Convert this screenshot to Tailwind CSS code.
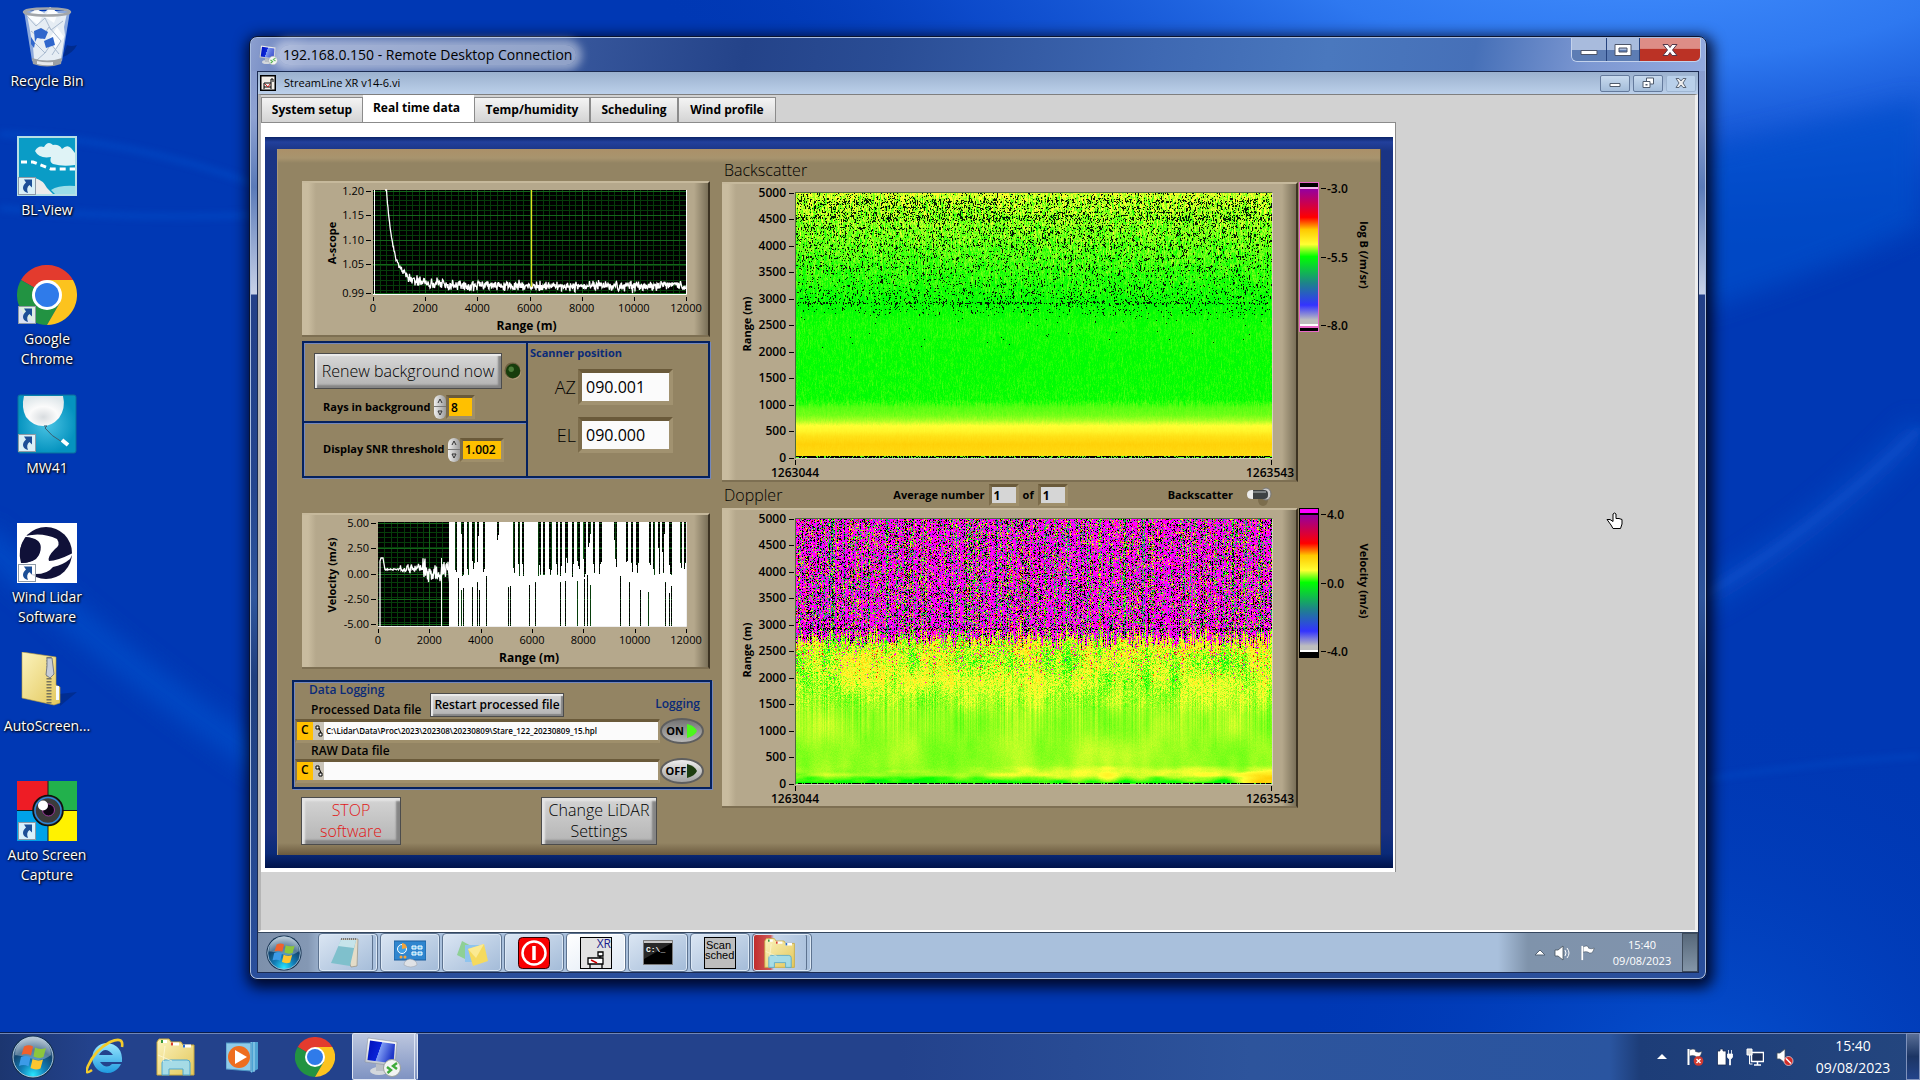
<!DOCTYPE html>
<html lang="en">
<head>
  <meta charset="UTF-8">
  <meta name="viewport" content="width=device-width, initial-scale=1.0">
  <title>StreamLine XR – Remote Desktop</title>
  <script src="https://cdn.jsdelivr.net/npm/@tailwindcss/browser@4"></script>
</head>
<body class="relative h-screen overflow-hidden bg-[#0038b4] font-['Open_Sans','Noto_Sans',sans-serif] text-black">

  <!-- Wallpaper -->
  <svg class="absolute inset-0 h-full w-full" viewBox="0 0 1920 1080" preserveAspectRatio="none" aria-hidden="true">
    <defs>
      <radialGradient id="sky" gradientUnits="userSpaceOnUse" cx="1640" cy="-60" r="1000" gradientTransform="matrix(1 0 0 .34 0 -38)">
        <stop offset="0" stop-color="#4490ff"/><stop offset=".35" stop-color="#2e78f0"/><stop offset=".7" stop-color="#1050d2" stop-opacity=".75"/><stop offset="1" stop-color="#0038b4" stop-opacity="0"/>
      </radialGradient>
      <radialGradient id="low" cx="1700" cy="1120" r="420" gradientUnits="userSpaceOnUse">
        <stop offset="0" stop-color="#0656d6"/><stop offset="1" stop-color="#0038b4" stop-opacity="0"/>
      </radialGradient>
      <filter id="soft" x="-20%" y="-20%" width="140%" height="140%"><feGaussianBlur stdDeviation="12"/></filter>
      <filter id="thin" x="-20%" y="-50%" width="140%" height="200%"><feGaussianBlur stdDeviation="3"/></filter>
    </defs>
    <rect width="1920" height="1080" fill="#0038b4"/>
    <rect width="1920" height="500" fill="url(#sky)"/>
    <rect y="600" width="1920" height="480" fill="url(#low)"/>
    <path d="M1700 310Q1830 270 1920 225V100L1700 150Z" fill="#0650cc" opacity=".7" filter="url(#soft)"/>
    <path d="M1700 600Q1820 530 1920 428" stroke="#0a54d0" stroke-width="22" fill="none" opacity=".6" filter="url(#soft)"/>
    <path d="M1700 598Q1820 526 1920 428" stroke="#0a54d0" stroke-width="8" fill="none" opacity=".4" filter="url(#thin)"/>
    <path d="M1700 780Q1820 762 1920 756" stroke="#0a50cc" stroke-width="4" fill="none" opacity=".5" filter="url(#thin)"/>
    <path d="M-20 535Q110 660 270 765" stroke="#0450cc" stroke-width="26" fill="none" opacity=".8" filter="url(#soft)"/>
    <path d="M0 134Q130 138 260 186M0 208Q130 220 260 215" stroke="#0650cc" stroke-width="6" fill="none" opacity=".5" filter="url(#thin)"/>
  </svg>

  <!-- Shared icons -->
  <svg class="absolute h-0 w-0" aria-hidden="true">
    <defs>
      <linearGradient id="silver" x2="0" y2="1"><stop stop-color="#fff"/><stop offset="1" stop-color="#bcc2ca"/></linearGradient>
      <linearGradient id="folder" x2="1" y2="1"><stop stop-color="#fbf3bd"/><stop offset="1" stop-color="#e3c75b"/></linearGradient>
      <radialGradient id="orbfill" cx=".5" cy=".95" r=".9"><stop stop-color="#29e6ff"/><stop offset=".35" stop-color="#127fb8"/><stop offset=".7" stop-color="#12456f"/><stop offset="1" stop-color="#8fa8bd"/></radialGradient>
      <linearGradient id="screen" x2="1" y2=".3"><stop stop-color="#0010b8"/><stop offset=".5" stop-color="#0a24d8"/><stop offset=".52" stop-color="#7f9cf4"/><stop offset="1" stop-color="#2038c8"/></linearGradient>
      <linearGradient id="aqua" x2="0" y2="1"><stop stop-color="#9be8ff"/><stop offset="1" stop-color="#1f9be0"/></linearGradient>
      <radialGradient id="teal"><stop stop-color="#4cc4e4"/><stop offset="1" stop-color="#0593bf"/></radialGradient>
      <radialGradient id="balloon" cx=".5" cy=".7" r=".7"><stop stop-color="#d8dcdf"/><stop offset=".5" stop-color="#fbfbfb"/><stop offset="1" stop-color="#dfe7ea"/></radialGradient>

      <symbol id="shortcut" viewBox="0 0 18 18">
        <rect x=".5" y=".5" width="17" height="17" fill="#fff" fill-opacity=".85" stroke="#8e9aa6"/>
        <path d="M6 2.500h8v8l-2.500-2.500c-2.500 2-3 4.500-1.500 8-6-1.500-6.500-7-2-10.500z" fill="#1d4f96"/>
      </symbol>
      <symbol id="chrome" viewBox="0 0 60 60">
        <path d="M30 30 4 15A30 30 0 0 1 56 15Z" fill="#e33b2e"/>
        <path d="M30 30 4 15A30 30 0 0 0 30 60L43 37.500Z" fill="#229342"/>
        <path d="M30 15H56A30 30 0 0 1 30 60L43 37.500Z" fill="#fcc31e"/>
        <circle cx="30" cy="30" r="15" fill="#fff"/><circle cx="30" cy="30" r="12" fill="#2f7bea"/>
      </symbol>
      <symbol id="orb" viewBox="0 0 44 44">
        <circle cx="22" cy="22" r="21.500" fill="#16324f"/>
        <circle cx="22" cy="22" r="20" fill="url(#orbfill)" stroke="#a9c4dc" stroke-width="1"/>
        <path d="M4 20A18 18 0 0 1 40 20Q31 27 22 24T4 20Z" fill="#fff" opacity=".3"/>
        <path d="M13 11.500q5-2.500 9 0l-2 9q-5-2.500-9.500-.5z" fill="#f0612c"/>
        <path d="M24 12.500q5 2.500 11 .5l-2.500 9q-5 2-10-.5z" fill="#8cc63c"/>
        <path d="M10 22q5-2 9.500.5l-2 9q-4.500-2.500-9.500-.5z" fill="#3c9be8"/>
        <path d="M21.500 24q5 2.500 10.500.500l-2.500 9q-5 2-10-.5z" fill="#fdc62f"/>
      </symbol>
      <symbol id="explorer" viewBox="0 0 40 40">
        <path d="M1 5 3 2h10l2 3h10l2 3h11v30H1Z" fill="url(#folder)" stroke="#c9a93f"/>
        <path d="M5 3h6v3H5zM15 5.500h8v3h-8zM27 7.500h8v3h-8z" fill="#fff"/>
        <path d="M5 3h2v3H5z" fill="#3a9a3a"/><path d="M15 5.500h2v3h-2z" fill="#d9402c"/><path d="M27 7.500h2v3h-2z" fill="#2c6fd0"/>
        <path d="M6 26q0-3 3-3h22q3 0 3 3v12h-7v-6H13v6H6Z" fill="#9ddcf2" fill-opacity=".9" stroke="#4fa7cf"/>
        <path d="M2 18 16 24M9 9l-2 16" stroke="#fffbe0" opacity=".7"/>
      </symbol>
      <symbol id="rdp" viewBox="0 0 40 40">
        <ellipse cx="15" cy="34" rx="9" ry="4" fill="#d3d7dc"/><path d="M12 25h7l1 9h-8z" fill="#b9bec6"/>
        <path d="M4 1 33 5 31 29 1 25Z" fill="url(#silver)" stroke="#8b93a0" stroke-width=".6"/>
        <path d="M6 3.500 31 7 29.500 26.500 3.500 23Z" fill="url(#screen)"/>
        <circle cx="28" cy="31" r="8.500" fill="#f2f4f2" stroke="#9ba19b"/>
        <path d="m23 30 4 3-3.500 3M33 26l-4 3 4 3" stroke="#3faa3a" stroke-width="2.400" fill="none"/>
      </symbol>
      <symbol id="speaker" viewBox="0 0 18 16">
        <path d="M1 5h3l5-4v14l-5-4H1Z" fill="#fff" stroke="#45505c" stroke-width=".8"/>
      </symbol>
      <symbol id="flag" viewBox="0 0 18 18">
        <path d="M2 1v16M3.500 2q4-2 6 0v1.500q3 1.500 6.500 0-1 4-3 5.500-3 .5-4-1-2-1-5.500 0z" fill="#fff" stroke="#3a4756" stroke-width=".6"/><path d="M1.500 1h2v16h-2z" fill="#fff"/>
      </symbol>
    </defs>
  </svg>

  <!-- Desktop icons -->
  <nav class="absolute left-0 top-[7px] grid w-[94px] auto-rows-[129px] text-center text-sm leading-5 text-white [text-shadow:1px_1px_2px_#000,0_0_3px_#000]">
    <a href="#" class="flex flex-col items-center gap-1">
      <svg class="size-[60px]" viewBox="0 0 60 60">
        <path d="M46 50q10-4 14-12-6 2-10 0z" fill="#00267c" opacity=".7"/>
        <path d="M7 4H53L45 54Q30 62 15 54Z" fill="#b9cdea" fill-opacity=".75"/>
        <path d="m10 8 9-6 8 4 6-6 8 6 9 0-3 14 1 8-4 24q-14 6-27 0l-1-12-4-22z" fill="#e6edf4"/>
        <path d="m19 2 8 4-6 12-10-8zM33 0l8 6-4 10-9-6zM40 20l7 10-9 12-6-10z" fill="#fafcfe"/>
        <path d="m10 9 9 10 9-8 6 12 12-9M14 24l10 8 8-12 12 14-9 14M18 36l10 10 6-9 8 10M20 53l9-8" fill="none" stroke="#a9bacf" stroke-width="1"/>
        <path d="m17 24 7-3 7 4-3 7-8-1-2 4zM27 34l9-4 2 8-9 3zM14 30l4 6-1 5-3-4z" fill="#2f66cc"/>
        <ellipse cx="30" cy="5" rx="23" ry="3.500" fill="none" stroke="#a2a6aa" stroke-width="2.500"/>
        <path d="M15 51q15 5 30 0l-1 6q-14 5-28 0z" fill="#9b9fa3"/><path d="M20 54q8 2 16 1v3q-8 1-16-1z" fill="#e6e8ea"/>
      </svg>
      <span>Recycle Bin</span>
    </a>
    <a href="#" class="flex flex-col items-center gap-1">
      <svg class="size-[60px]" viewBox="0 0 60 60">
        <rect width="60" height="60" fill="#b6dfe6"/><rect x="2" y="2" width="56" height="56" fill="#0a9cc6"/>
        <path d="M18 15q3-6 9-4 4-7 9-2 6-1 9 4 5-5 9-1l4 5v12q-12 2-22-1-4-2-2-7-12 2-16-6z" fill="#dff3f6"/>
        <path d="M4 26h12l18 7h24" stroke="#fff" stroke-width="3" stroke-dasharray="6 4" fill="none"/>
        <path d="M18 58V42q8 2 12 10l6 6z" fill="#ecebea"/><path d="M34 54q8-5 24-4v8H38z" fill="#9cdde8"/>
        <use href="#shortcut" x="1" y="41" width="18" height="18"/>
      </svg>
      <span>BL-View</span>
    </a>
    <a href="#" class="flex flex-col items-center gap-1">
      <svg class="size-[60px]" viewBox="0 0 60 60"><use href="#chrome" width="60" height="60"/><use href="#shortcut" x="1" y="41" width="18" height="18"/></svg>
      <span class="w-16">Google Chrome</span>
    </a>
    <a href="#" class="flex flex-col items-center gap-1">
      <svg class="size-[60px]" viewBox="0 0 60 60">
        <rect x="1" y="1" width="58" height="58" rx="2" fill="url(#teal)" stroke="#0b6f9c"/>
        <path d="M7 2H46Q49 14 42 24 35 32 26 32 16 32 9 23 4 14 7 2Z" fill="url(#balloon)"/>
        <path d="m27 32 3 0-2 2q6 8 17 14" stroke="#3c5f70" fill="none"/><path d="m45 46 6 5" stroke="#fff" stroke-width="4"/>
        <use href="#shortcut" x="1" y="40" width="18" height="18"/>
      </svg>
      <span>MW41</span>
    </a>
    <a href="#" class="flex flex-col items-center gap-1">
      <svg class="size-[60px]" viewBox="0 0 60 60">
        <rect width="60" height="60" fill="#fff"/><circle cx="29" cy="30" r="26" fill="#101138"/>
        <path d="M4 14Q24 8 40 16 44 22 38 26 30 34 32 38 40 38 56 30L53 36Q46 42 36 44 30 52 15 51L4 40Q18 40 22 32 27 20 18 16 10 13 4 14Z" fill="#fff"/>
        <path d="M8 16q10-2 14 4 3 8-2 14-6 6-16 6Q0 26 8 16Z" fill="#101138"/>
        <use href="#shortcut" x="1" y="41" width="18" height="18"/>
      </svg>
      <span class="w-20">Wind Lidar Software</span>
    </a>
    <a href="#" class="flex flex-col items-center gap-1">
      <svg class="size-[60px]" viewBox="0 0 60 60">
        <path d="m43 54 17-14-18 2z" fill="#00267c" opacity=".6"/>
        <path d="M5 0 39 5v28l4 2v16l-6 2L5 46Z" fill="url(#folder)" stroke="#b99e3e" stroke-width=".6"/>
        <path d="M39 34h3v14h-3z" fill="#f7fbfd"/>
        <path d="M32 5v47" stroke="#78745c" stroke-width="5" stroke-dasharray="1.500 1.500"/>
        <path d="M30 6h5l1 8 1 8-4 4-4-3 1-9z" fill="#c7cdd6" stroke="#777e88"/>
      </svg>
      <span>AutoScreen...</span>
    </a>
    <a href="#" class="flex flex-col items-center gap-1">
      <svg class="size-[60px]" viewBox="0 0 60 60">
        <path d="M0 0h31v30H0z" fill="#ee1c25"/><path d="M31 0h29v30H31z" fill="#22b14c"/><path d="M0 30h31v30H0z" fill="#00a2e8"/><path d="M31 30h29v30H31z" fill="#fff200"/>
        <path d="M31 0v60M0 29.500h60" stroke="#1b1b1b"/>
        <circle cx="31" cy="29.500" r="15" fill="#3b3b3b" stroke="#101010" stroke-width="1.500"/><circle cx="31" cy="29.500" r="13" fill="none" stroke="#2f86d8" stroke-width="1.500"/>
        <circle cx="31.500" cy="29" r="6" fill="#0d0413" stroke="#9b3a9b"/><circle cx="26" cy="24.500" r="5" fill="#fff"/>
        <use href="#shortcut" x="1" y="41" width="18" height="18"/>
      </svg>
      <span class="w-22">Auto Screen Capture</span>
    </a>
  </nav>

  <!-- Remote desktop window -->
  <section class="absolute bottom-[100px] left-[249px] right-[213px] top-[36px] flex flex-col rounded-lg border border-[#0a1430] bg-[linear-gradient(to_bottom,#8498cc_0,#8ea2d2_80px,#5a7ab8_150px,#c8d2e8_257px,#234088_258px,#24458e_450px,#2f559c_560px,#20407f_640px,#2a4f9c_100%)] px-[7px] pb-[6px] shadow-[inset_0_0_0_1px_#a9bde0,2px_4px_14px_4px_rgba(0,0,20,.85)]">
    <header class="mx-[-6px] mt-px flex h-[33px] shrink-0 items-center justify-between rounded-t-md bg-[linear-gradient(100deg,#8c9fcf_0,#5873b4_4%,#3a5a9f_20%,#244389_34%,#2a4d95_44%,#3e68b2_62%,#4a78be_74%,#4670b8_84%,#7d98d2_92%,#93aade_100%)] pl-2">
      <div class="flex items-center">
        <svg class="size-5" viewBox="0 0 40 40"><use href="#rdp" width="40" height="40"/></svg>
        <h1 class="rounded-full bg-white/45 px-1 text-sm leading-5 shadow-[0_0_8px_6px_rgba(255,255,255,.45)]">192.168.0.150 - Remote Desktop Connection</h1>
      </div>
      <div class="mr-1 flex h-6 self-start overflow-hidden rounded-b-md border border-t-0 border-[#c3d2ec]">
        <button aria-label="Minimise" class="flex w-[35px] items-center justify-center border-r border-[#26437e] bg-linear-to-b from-[#a8bbdd] from-50% to-[#5d7db4] to-50%"><svg class="h-3 w-5" viewBox="0 0 20 12"><path d="M2 6.500h16v4H2z" fill="#fff" stroke="#4d5568"/></svg></button>
        <button aria-label="Maximise" class="flex w-[33px] items-center justify-center border-r border-[#26437e] bg-linear-to-b from-[#a8bbdd] from-50% to-[#5d7db4] to-50%"><svg class="h-3 w-5" viewBox="0 0 20 12"><path d="M2 .5h16v11H2zM6 4v4h8V4z" fill="#fff" fill-rule="evenodd" stroke="#4d5568"/></svg></button>
        <button aria-label="Close" class="flex w-[60px] items-center justify-center bg-linear-to-b from-[#dd8d86] from-45% to-[#bb3225] to-50%"><svg class="h-3 w-4" viewBox="0 0 16 12"><path d="M1 .5h5l2 3 2-3h5l-4.500 5.500 4.500 5.500h-5l-2-3-2 3H1L5.500 6Z" fill="#fff" stroke="#54394a"/></svg></button>
      </div>
    </header>

    <div class="flex min-h-0 flex-1 flex-col border border-[#1b2b52] bg-[#d2d2d2]">
      <!-- Application title -->
      <div class="flex h-[22px] shrink-0 items-center bg-linear-to-b from-[#9bb1ce] to-[#bcd0ea] pl-0.5 pr-0.5">
        <svg class="size-4" viewBox="0 0 16 16"><rect x=".75" y=".75" width="14.500" height="14.500" fill="#f3efe8" stroke="#000" stroke-width="1.500"/><path d="M4 14V8h7v6M11 8V4h2v3M4 12h7" fill="none" stroke="#000"/><path d="m5 9 3 3 2-3" stroke="#c22" fill="none"/></svg>
        <h2 class="ml-2 flex-1 text-[11px]">StreamLine XR v14-6.vi</h2>
        <div class="flex gap-[3px]">
          <button aria-label="Minimise panel" class="flex h-[17px] w-[30px] items-center justify-center rounded-xs border border-[#647a9c] bg-linear-to-b from-[#c8daee] to-[#a3bcd9]"><svg class="h-2 w-3" viewBox="0 0 12 8"><path d="M1 4.500h10v3H1z" fill="#fff" stroke="#4f5b6c"/></svg></button>
          <button aria-label="Restore panel" class="flex h-[17px] w-[30px] items-center justify-center rounded-xs border border-[#647a9c] bg-linear-to-b from-[#c8daee] to-[#a3bcd9]"><svg class="h-3 w-3" viewBox="0 0 12 12"><path d="M4.500 1h7v6h-7z" fill="#fff" stroke="#4f5b6c"/><path d="M1 4.500h7v6H1z" fill="#fff" stroke="#4f5b6c"/><path d="M3.500 7h2v1.500h-2z" fill="#4f5b6c"/></svg></button>
          <button aria-label="Close panel" class="flex h-[17px] w-[30px] items-center justify-center rounded-xs border border-[#9fb6d2] bg-[#b9d0ea]"><svg class="h-2.5 w-3" viewBox="0 0 12 10"><path d="M1 .5h3l2 2.500 2-2.500h3L8 5l3 4.500H8L6 7 4 9.500H1L4 5Z" fill="#eee" stroke="#5c6878"/></svg></button>
        </div>
      </div>

      <div class="min-h-0 flex-1 border-b-2 border-l-3 border-r-3 border-t border-b-white border-l-[#b5b5b5] border-r-[#eee] border-t-[#7f7f7f]">
        <!-- Tabs -->
        <div role="tablist" class="flex h-[27px] items-end text-xs font-bold">
          <button role="tab" class="h-[25px] w-[102px] border border-b-0 border-[#8b8b8b] bg-linear-to-b from-[#f4f4f4] to-[#d4d4d4]">System setup</button>
          <button role="tab" aria-selected="true" class="h-[27px] w-[111px] bg-white pb-0.5 pr-1">Real time data</button>
          <button role="tab" class="h-[25px] w-[116px] border border-b-0 border-[#8b8b8b] bg-linear-to-b from-[#f4f4f4] to-[#d4d4d4]">Temp/humidity</button>
          <button role="tab" class="h-[25px] w-[88px] border border-b-0 border-[#8b8b8b] bg-linear-to-b from-[#f4f4f4] to-[#d4d4d4]">Scheduling</button>
          <button role="tab" class="h-[25px] w-[98px] border border-b-0 border-[#8b8b8b] bg-linear-to-b from-[#f4f4f4] to-[#d4d4d4]">Wind profile</button>
        </div>

        <main class="w-fit border-r border-t border-[#8b8b8b] bg-white pb-1 pl-1 pr-0.5 pt-3.5">
          <div class="bg-[linear-gradient(to_bottom,#0b2468_0,#22409c_5px,#1a3484_14px,#183080_95%,#0a2a78_98%,#00134a_100%)] p-3 pb-[13px]">
            <div class="flex w-[1104px] gap-2.5 border-x border-[#a99878] border-r-[#5c4e36] bg-[linear-gradient(to_bottom,#ab9068_0,#a8946e_9px,#938463_14px,#938463_calc(100%-12px),#6a5a3e_100%)] pb-[10px] pl-3.5 pt-[11px]">

              <!-- Left column -->
              <div class="w-[420px] pt-[21px]">
                <figure class="ml-2.5 h-[156px] w-[408px] border-b-2 border-r-2 border-t-2 border-b-[#7d6f52] border-r-[#3c3322] border-t-[#c6b99c] bg-[linear-gradient(to_right,#c9bc9f_0,#c9bc9f_6px,#b5a88c_14px,#b5a88c_392px,#7a7058_100%)]">
                  <svg id="ascope" class="-mt-0.5 h-[156px] w-[408px]" viewBox="0 0 408 156" role="img" aria-label="A-scope"></svg>
                </figure>

                <div class="ml-2.5 mt-1 grid h-[137px] w-[408px] grid-cols-[224px_1fr] border-2 border-[#04215f] shadow-[inset_1px_1px_0_#7488bd,1px_1px_0_#7488bd]">
                  <div class="grid grid-rows-[80px_1fr] border-r-2 border-[#04215f]">
                    <div class="border-b-2 border-[#04215f] shadow-[0_1px_0_#7488bd]">
                      <div class="mt-2.5 flex items-center gap-0.5 pl-2.5">
                        <button class="h-9 w-[188px] border border-[#4c4c4c] bg-linear-to-b from-[#d8d8d8] to-[#b2b2b2] text-base font-light shadow-[inset_2px_2px_1px_#ececec,inset_-3px_-3px_2px_#858585]">Renew background now</button>
                        <svg class="size-[18px]" viewBox="0 0 20 20"><circle cx="10" cy="10.500" r="9" fill="#b4a37d"/><circle cx="9.500" cy="9.500" r="9" fill="#6d5f41"/><circle cx="10" cy="10" r="8" fill="#173d0c"/><circle cx="8" cy="8" r="3" fill="#4a7a38"/></svg>
                      </div>
                      <div class="mt-1.5 flex items-center pl-[19px]">
                        <label for="rays" class="w-[111px] whitespace-nowrap text-[11px] font-bold">Rays in background</label>
                        <span class="flex h-6 w-3 flex-col overflow-hidden rounded-full bg-linear-to-r from-[#efefef] to-[#9b9b9b]">
                          <button aria-label="More rays" class="h-3 border-b border-[#777]"><svg class="h-2.5 w-3" viewBox="0 0 12 10"><path d="m4 7 2-4 2 4" fill="none" stroke="#333"/></svg></button>
                          <button aria-label="Fewer rays" class="h-3"><svg class="h-2.5 w-3" viewBox="0 0 12 10"><path d="m4 3 2 4 2-4z" fill="none" stroke="#333"/></svg></button>
                        </span>
                        <input id="rays" value="8" class="h-6 w-[29px] border-3 border-b-[#9f8f6b] border-l-[#7c6c4b] border-r-[#9f8f6b] border-t-[#6a5a3a] bg-[#ffc000] px-0.5 text-xs font-semibold">
                      </div>
                    </div>
                    <div class="flex items-center pl-[19px]">
                      <label for="snr" class="w-[125px] whitespace-nowrap text-[11px] font-bold">Display SNR threshold</label>
                      <span class="flex h-6 w-3 flex-col overflow-hidden rounded-full bg-linear-to-r from-[#efefef] to-[#9b9b9b]">
                        <button aria-label="Raise threshold" class="h-3 border-b border-[#777]"><svg class="h-2.5 w-3" viewBox="0 0 12 10"><path d="m4 7 2-4 2 4" fill="none" stroke="#333"/></svg></button>
                        <button aria-label="Lower threshold" class="h-3"><svg class="h-2.5 w-3" viewBox="0 0 12 10"><path d="m4 3 2 4 2-4z" fill="none" stroke="#333"/></svg></button>
                      </span>
                      <input id="snr" value="1.002" class="h-6 w-11 border-3 border-b-[#9f8f6b] border-l-[#7c6c4b] border-r-[#9f8f6b] border-t-[#6a5a3a] bg-[#ffc000] px-0.5 text-xs font-semibold">
                    </div>
                  </div>
                  <div class="pl-0.5 pt-0.5">
                    <h3 class="text-[11px] font-bold leading-4 text-[#0a2a78]">Scanner position</h3>
                    <div class="mt-2 grid grid-cols-[46px_95px] items-center gap-x-0.5 gap-y-3">
                      <label for="az" class="text-right text-lg font-light">AZ</label>
                      <input id="az" value="090.001" class="h-9 w-full border-4 border-b-[#a19270] border-l-[#7c6c4b] border-r-[#a19270] border-t-[#6a5a3a] bg-[#fbfbfb] px-1 text-base">
                      <label for="el" class="text-right text-lg font-light">EL</label>
                      <input id="el" value="090.000" class="h-9 w-full border-4 border-b-[#a19270] border-l-[#7c6c4b] border-r-[#a19270] border-t-[#6a5a3a] bg-[#fbfbfb] px-1 text-base">
                    </div>
                  </div>
                </div>

                <figure class="ml-2.5 mt-[35px] h-[156px] w-[408px] border-b-2 border-r-2 border-t-2 border-b-[#7d6f52] border-r-[#3c3322] border-t-[#c6b99c] bg-[linear-gradient(to_right,#c9bc9f_0,#c9bc9f_6px,#b5a88c_14px,#b5a88c_392px,#7a7058_100%)]">
                  <svg id="velocity" class="-mt-0.5 h-[156px] w-[408px]" viewBox="0 0 408 156" role="img" aria-label="Velocity"></svg>
                </figure>

                <fieldset class="mt-[11px] h-[109px] border-2 border-[#04215f] pl-px shadow-[inset_1px_1px_0_#7488bd,1px_1px_0_#7488bd]">
                  <div class="flex h-[37px]">
                    <div class="w-[135px] pl-3.5 text-xs font-semibold">
                      <h3 class="text-[#0a2a78]">Data Logging</h3>
                      <label for="proc" class="block whitespace-nowrap pl-0.5 leading-6">Processed Data file</label>
                    </div>
                    <button class="mt-[11px] h-6 w-[134px] border border-[#4c4c4c] bg-linear-to-b from-[#d8d8d8] to-[#b2b2b2] text-xs font-semibold shadow-[inset_2px_2px_1px_#ececec,inset_-2px_-2px_1px_#858585]">Restart processed file</button>
                    <span class="ml-auto mr-2.5 mt-3.5 text-xs font-semibold text-[#0a2a78]">Logging</span>
                  </div>
                  <div class="flex h-6 items-center">
                    <div class="flex h-6 flex-1 border-3 border-x-2 border-b-[#9f8f6b] border-l-[#8a7a56] border-r-[#a39473] border-t-[#6a5a3a]">
                      <span class="w-4 bg-[#ffc000] pl-1 text-xs font-semibold">C</span>
                      <button aria-label="Browse processed file" class="flex w-[11px] items-center justify-center bg-[#c9c4b8]"><svg class="h-3 w-2" viewBox="0 0 8 12"><path d="M1 1h3v3H1zM4 8h3v3H4zM4 3l2 5" fill="#fff" stroke="#000"/></svg></button>
                      <input id="proc" value="C:\Lidar\Data\Proc\2023\202308\20230809\Stare_122_20230809_15.hpl" class="min-w-0 flex-1 bg-[#fbfbfb] px-0.5 text-[8px] font-semibold leading-4">
                    </div>
                    <button class="mr-1.5 flex h-[26px] w-11 items-center justify-center gap-0.5 rounded-[50%] border-2 border-[#5e5e5e] bg-linear-to-b from-[#757575] to-[#b8b8b8] text-[11px] font-bold">ON<svg class="h-3.5 w-3" viewBox="0 0 12 14"><path d="M1 0q8 2 10 7-2 5-10 7z" fill="#4cf81c"/></svg></button>
                  </div>
                  <label for="raw" class="block pl-4 text-xs font-semibold">RAW Data file</label>
                  <div class="flex h-6 items-center">
                    <div class="flex h-6 flex-1 border-3 border-x-2 border-b-[#9f8f6b] border-l-[#8a7a56] border-r-[#a39473] border-t-[#6a5a3a]">
                      <span class="w-4 bg-[#ffc000] pl-1 text-xs font-semibold">C</span>
                      <button aria-label="Browse raw file" class="flex w-[11px] items-center justify-center bg-[#c9c4b8]"><svg class="h-3 w-2" viewBox="0 0 8 12"><path d="M1 1h3v3H1zM4 8h3v3H4zM4 3l2 5" fill="#fff" stroke="#000"/></svg></button>
                      <input id="raw" value="" class="min-w-0 flex-1 bg-[#fbfbfb] px-0.5 text-[8px] font-semibold leading-4">
                    </div>
                    <button class="mr-1.5 flex h-[26px] w-11 items-center justify-center rounded-[50%] border-2 border-[#5e5e5e] bg-linear-to-b from-[#ededed] to-[#a3a3a3] text-[11px] font-bold">OFF<svg class="h-3.5 w-3" viewBox="0 0 12 14"><path d="M1 0q8 2 10 7-2 5-10 7z" fill="#1d3d10"/></svg></button>
                  </div>
                </fieldset>

                <div class="ml-[9px] mt-2 flex gap-[140px] text-base font-light">
                  <button class="h-12 w-[100px] border border-[#4c4c4c] bg-linear-to-b from-[#d4d4d4] to-[#b4b4b4] leading-[21px] text-[#e01818] shadow-[inset_3px_3px_2px_#e4e4e4,inset_-4px_-4px_2px_#858585]">STOP<br>software</button>
                  <button class="h-12 w-[116px] border border-[#4c4c4c] bg-linear-to-b from-[#d4d4d4] to-[#b4b4b4] leading-[21px] shadow-[inset_3px_3px_2px_#e4e4e4,inset_-4px_-4px_2px_#858585]">Change LiDAR<br>Settings</button>
                </div>
              </div>

              <!-- Right column -->
              <div class="flex-1">
                <h3 class="h-[22px] pl-0.5 text-base font-light leading-5">Backscatter</h3>
                <div class="flex">
                  <figure class="h-[300px] w-[576px] border-b-2 border-r-2 border-t-2 border-b-[#7d6f52] border-r-[#3c3322] border-t-[#c6b99c] bg-[linear-gradient(to_right,#c9bc9f_0,#c9bc9f_6px,#b5a88c_14px,#b5a88c_560px,#7a7058_100%)]">
                    <div class="flex pt-2">
                      <svg id="bs-y" class="h-[267px] w-[73px] overflow-visible" viewBox="0 0 73 267"></svg>
                      <canvas id="backscatter" class="border border-[#d8d2c0] border-l-[#4d6a3c] border-t-[#4d6a3c]" width="476" height="265"></canvas>
                    </div>
                    <svg id="bs-x" class="h-[21px] w-[574px]" viewBox="0 0 574 21"></svg>
                  </figure>
                  <svg id="bs-bar" class="h-[152px] w-[82px] overflow-visible" viewBox="0 0 82 152"></svg>
                </div>
                <div class="flex h-[26px] items-center text-[11px] font-bold">
                  <h3 class="pl-0.5 text-base font-light">Doppler</h3>
                  <label for="avg" class="ml-auto pr-1">Average number</label>
                  <input id="avg" value="1" class="h-[22px] w-[30px] border-3 border-b-[#9f8f6b] border-l-[#7c6c4b] border-r-[#9f8f6b] border-t-[#6a5a3a] bg-[#d6d6d6] px-0.5 text-xs">
                  <label for="total" class="px-1">of</label>
                  <input id="total" value="1" class="h-[22px] w-[30px] border-3 border-b-[#9f8f6b] border-l-[#7c6c4b] border-r-[#9f8f6b] border-t-[#6a5a3a] bg-[#d6d6d6] px-0.5 text-xs">
                  <span class="ml-[100px]">Backscatter</span>
                  <button aria-label="Switch plot" class="ml-3 mr-[107px]"><svg class="h-6 w-7" viewBox="0 0 28 24"><ellipse cx="18" cy="17" rx="5" ry="6" fill="#6c5d3e" opacity=".6"/><ellipse cx="21" cy="11" rx="5" ry="6" fill="#c9c9c9" stroke="#777"/><rect x="3" y="7" width="20" height="9" rx="4" fill="#3d4143"/><path d="M8 7H7Q2 7 2 11.500T7 16h1z" fill="#ececec"/><path d="M8 8h13v2H8z" fill="#7b8082"/></svg></button>
                </div>
                <div class="flex">
                  <figure class="h-[300px] w-[576px] border-b-2 border-r-2 border-t-2 border-b-[#7d6f52] border-r-[#3c3322] border-t-[#c6b99c] bg-[linear-gradient(to_right,#c9bc9f_0,#c9bc9f_6px,#b5a88c_14px,#b5a88c_560px,#7a7058_100%)]">
                    <div class="flex pt-2">
                      <svg id="dp-y" class="h-[267px] w-[73px] overflow-visible" viewBox="0 0 73 267"></svg>
                      <canvas id="doppler" class="border border-[#d8d2c0] border-l-[#4d6a3c] border-t-[#4d6a3c]" width="476" height="265"></canvas>
                    </div>
                    <svg id="dp-x" class="h-[21px] w-[574px]" viewBox="0 0 574 21"></svg>
                  </figure>
                  <svg id="dp-bar" class="h-[152px] w-[82px] overflow-visible" viewBox="0 0 82 152"></svg>
                </div>
              </div>
            </div>
          </div>
        </main>
      </div>

      <!-- Remote taskbar -->
      <div class="flex h-10 shrink-0 items-stretch gap-0.5 border-t border-[#34465e] bg-[linear-gradient(to_right,#7d90ab_0,#8498b4_50px,#a9c0dc_70px,#a9c0dc_calc(100%-200px),#7f93ab_calc(100%-170px),#8093ad_100%)]">
        <button aria-label="Start" class="w-[58px] pl-2"><svg class="size-9" viewBox="0 0 44 44"><use href="#orb" width="44" height="44"/></svg></button>
        <button aria-label="Notepad" class="flex w-[60px] items-center justify-center rounded-sm border border-[#5d7390] bg-linear-to-br from-[#dbe6f3] to-[#a3bbd8] pr-1 shadow-[inset_0_0_0_1px_#dce8f5,inset_-4px_0_0_#a9c0dc,inset_-5px_0_0_#5d7390]"><svg class="size-8" viewBox="0 0 32 32"><path d="M11 2h17l-1 27-6 1z" fill="#e4dcc8" stroke="#8d8673" stroke-width=".6"/><path d="M11 3h15L20 29 1 26Z" fill="#7fc0cc"/><path d="M11 3h15l-2 8-16-2z" fill="#c6e4ea"/><path d="M11 2h16" stroke="#777" stroke-width="2" stroke-dasharray="1 1"/></svg></button>
        <button aria-label="Control panel" class="flex w-[60px] items-center justify-center rounded-sm border border-[#5d7390] bg-linear-to-br from-[#dbe6f3] to-[#a3bbd8] shadow-[inset_0_0_0_1px_#dce8f5]"><svg class="size-8" viewBox="0 0 32 32"><path d="M0 4h32v19H0z" fill="#2f86cf" stroke="#1c5f9e"/><circle cx="8" cy="12" r="4.500" fill="#3f9fe4" stroke="#fff"/><path d="M8 12V6a6 6 0 0 1 5 5z" fill="#f3a43a"/><path d="M18 9h4v3h-4zM24 9h4v3h-4zM18 15h4v3h-4zM24 15h4v3h-4z" fill="#4fb8f0" stroke="#fff"/><circle cx="7" cy="20" r="1.500" fill="#f6a43a"/><circle cx="11" cy="20" r="1.500" fill="#f6a43a"/><path d="M10 28q0-5 6-6 7 1 7 6-6 4-13 0z" fill="#dfe2e6" stroke="#9a9fa6" stroke-width=".5"/></svg></button>
        <button aria-label="Sticky notes" class="flex w-[60px] items-center justify-center rounded-sm border border-[#5d7390] bg-linear-to-br from-[#dbe6f3] to-[#a3bbd8] shadow-[inset_0_0_0_1px_#dce8f5]"><svg class="size-8" viewBox="0 0 32 32"><path d="m6 4 13 7-6 13L1 18Z" fill="#8ed095"/><path d="M9 8h15v17H9z" fill="#8fc4ee"/><path d="m12 12 16-5 4 17-15 5Z" fill="#f5da5e"/><path d="m12 12 16-5-8 14z" fill="#fbea92"/></svg></button>
        <button aria-label="Power" class="flex w-[60px] items-center justify-center rounded-sm border border-[#5d7390] bg-linear-to-br from-[#dbe6f3] to-[#a3bbd8] shadow-[inset_0_0_0_1px_#dce8f5]"><svg class="size-8" viewBox="0 0 32 32"><rect x=".5" y=".5" width="31" height="31" rx="4" fill="#f80000" stroke="#300"/><circle cx="16" cy="16" r="11.500" fill="none" stroke="#fff" stroke-width="2.500"/><path d="M16 9v14" stroke="#fff" stroke-width="3.500"/></svg></button>
        <button aria-label="StreamLine XR" class="flex w-[60px] items-center justify-center rounded-sm border border-[#5d7390] bg-linear-to-br from-white to-[#dfe9f5] shadow-[inset_0_0_0_1px_#fff]"><svg class="size-8" viewBox="0 0 32 32"><rect x=".5" y=".5" width="31" height="31" fill="#e2e2e2" stroke="#000"/><text x="31" y="11" text-anchor="end" font-size="12" fill="#1a1a8c">XR</text><path d="M8 21h15v6H8zM18 15h5v4h-5zM20 19v2M10 27v4M22 27v4" fill="#fff" stroke="#000" stroke-width="1.300"/><path d="m11 23 6 3" stroke="#c00" stroke-width="1.500"/></svg></button>
        <button aria-label="Command prompt" class="flex w-[60px] items-center justify-center rounded-sm border border-[#5d7390] bg-linear-to-br from-[#dbe6f3] to-[#a3bbd8] shadow-[inset_0_0_0_1px_#dce8f5]"><svg class="size-8" viewBox="0 0 32 32"><path d="M1.500 3.500h29v24h-29z" fill="#000" stroke="#7b7b7b"/><path d="M2 4h28v2H2z" fill="#c9c9c9"/><path d="M2 6h28L2 22z" fill="#3a3a3a" opacity=".7"/><text x="4" y="15" font-size="8" font-weight="700" font-family="Liberation Mono" fill="#fff">C:\_</text></svg></button>
        <button aria-label="Scan scheduler" class="flex w-[60px] items-center justify-center rounded-sm border border-[#5d7390] bg-linear-to-br from-[#dbe6f3] to-[#a3bbd8] shadow-[inset_0_0_0_1px_#dce8f5]"><svg class="size-8" viewBox="0 0 32 32"><rect x=".5" y=".5" width="31" height="31" fill="#bdbdbd" stroke="#000"/><text x="2" y="12" font-size="11" font-family="Liberation Sans">Scan</text><text x="1" y="22" font-size="11" font-family="Liberation Sans">sched</text></svg></button>
        <button aria-label="Explorer" class="flex w-[60px] items-center justify-center rounded-sm border border-[#5d7390] bg-[linear-gradient(to_right,#c02a2a_0,#cf5a58_30%,#c6d6ea_36%,#a9c0dc_100%)] pr-1 shadow-[inset_0_0_0_1px_#dce8f5,inset_-4px_0_0_#a9c0dc,inset_-5px_0_0_#5d7390]"><svg class="size-8" viewBox="0 0 40 40"><use href="#explorer" width="40" height="40"/></svg></button>
        <div class="ml-auto flex items-center gap-2 text-center text-white">
          <svg class="h-2 w-3" viewBox="0 0 12 8"><path d="m6 1 5 5H1z" fill="#fff" stroke="#556476"/></svg>
          <svg class="h-4 w-[18px]" viewBox="0 0 18 16"><use href="#speaker" width="18" height="16"/><path d="M11 5q2 3 0 6M13 3q4 5 0 10" fill="none" stroke="#fff"/></svg>
          <svg class="size-4" viewBox="0 0 18 18"><use href="#flag" width="18" height="18"/></svg>
          <time class="ml-1.5 w-16 text-[11px] leading-4">15:40<br>09/08/2023</time>
          <button aria-label="Show remote desktop" class="h-full w-4 border border-[#3f4c5c] bg-linear-to-b from-[#57687a] to-[#8496a8]"></button>
        </div>
      </div>
    </div>
  </section>

  <!-- Pointer -->
  <svg class="absolute left-[1606px] top-[512px] h-[18px] w-[18px]" viewBox="0 0 18 18" aria-hidden="true"><path d="M1 7.500h3l3 2V2q1.500-2 3 0v4.500h3l3 1v4.500l-1.500 4.500H7L5 13Z" fill="#fff" stroke="#000"/></svg>

  <!-- Host taskbar -->
  <footer class="absolute inset-x-0 bottom-0 flex h-12 items-stretch border-t border-[#0a1c4a] bg-[linear-gradient(to_right,#1c3670_0,#23428c_90px,#23428c_900px,#2d549c_1250px,#2a55a0_calc(100%-310px),#1d3d78_calc(100%-280px),#24467f_100%)] shadow-[inset_0_1px_0_#6f86b8]">
    <button aria-label="Start" class="w-[77px] pl-[11px]"><svg class="size-11" viewBox="0 0 44 44"><use href="#orb" width="44" height="44"/></svg></button>
    <button aria-label="Internet Explorer" class="flex w-14 items-center justify-center"><svg class="size-[38px]" viewBox="0 0 38 38"><path d="M20 5a15 15 0 1 0 15 21H26q-6 6-12-2H36Q37 6 20 5ZM13 17q6-10 14 0z" fill="url(#aqua)" fill-rule="evenodd"/><path d="M6 32Q-2 38 2 28 9 12 24 4 38-2 36 9" fill="none" stroke="#f4cc2c" stroke-width="2.600"/></svg></button>
    <button aria-label="File explorer" class="flex w-[85px] items-center justify-center"><svg class="size-10" viewBox="0 0 40 40"><use href="#explorer" width="40" height="40"/></svg></button>
    <button aria-label="Media player" class="flex w-12 items-center justify-center"><svg class="h-9 w-8" viewBox="0 0 32 36"><path d="M25 3h7v27l-7 4z" fill="#4fa3d3"/><path d="M28 3v30M25 3v30" stroke="#a8dcf4"/><path d="M0 4h25v28L0 30z" fill="#8fcbe9" stroke="#4d97c6"/><circle cx="13" cy="18" r="11" fill="#ee6d1f"/><path d="m9 11 12 7-12 7z" fill="#fff"/></svg></button>
    <button aria-label="Chrome" class="flex w-[86px] items-center justify-center pl-3"><svg class="size-10" viewBox="0 0 60 60"><use href="#chrome" width="60" height="60"/></svg></button>
    <button aria-label="Remote Desktop" class="flex w-[66px] items-center justify-center rounded-xs border border-r-4 border-double border-[#dfe6f4] bg-linear-to-b from-[#bcc6de] to-[#7f93c2]"><svg class="size-10" viewBox="0 0 40 40"><use href="#rdp" width="40" height="40"/></svg></button>
    <div class="ml-auto flex items-center text-center text-white">
      <div class="flex items-center gap-3">
        <svg class="mr-1.5 h-2 w-3" viewBox="0 0 12 8"><path d="m6 1 5 5H1z" fill="#fff"/></svg>
        <svg class="size-[18px]" viewBox="0 0 18 18"><use href="#flag" width="18" height="18"/><circle cx="12.500" cy="13" r="4.800" fill="#d23a30"/><path d="m10.500 11 4 4m0-4-4 4" stroke="#fff" stroke-width="1.400"/></svg>
        <svg class="size-[18px]" viewBox="0 0 18 18"><path d="M1.500 3h2.500V1h3v2H10v14H1.500z" fill="#fff" stroke="#1b2c50" stroke-width=".8"/><path d="M12.500 2v4M15.500 2v4M11.500 6h5v3q-1 2-2 2v6h-1v-6q-2-1-2-2z" fill="#fff" stroke="#fff" stroke-width=".8"/></svg>
        <svg class="size-[18px]" viewBox="0 0 18 18"><path d="M5.500 4.500h12v9h-12zM8 17h7M11.500 14v3" fill="#1c2f58" stroke="#fff" stroke-width="1.500"/><path d="M1 1h5v6H1z" fill="#ddd" stroke="#fff"/><path d="M3.500 7v9h3" stroke="#fff" fill="none"/></svg>
        <svg class="size-[18px]" viewBox="0 0 18 18"><use href="#speaker" width="18" height="16"/><circle cx="12.500" cy="13" r="4.500" fill="#d22c28" stroke="#fff" stroke-width=".6"/><path d="m10 10.500 5 5" stroke="#fff" stroke-width="1.500"/></svg>
      </div>
      <time class="ml-3 mr-1.5 w-[94px] text-sm leading-[22px]">15:40<br>09/08/2023</time>
      <button aria-label="Show desktop" class="h-full w-3.5 border border-[#7f92bc] bg-linear-to-b from-[#5a6f96] via-[#1c3564] to-[#23448a]"></button>
    </div>
  </footer>

  <script>
    // Repeatable random numbers
    let seed = 20230809;
    function rnd() {
      seed = (seed + 0x6D2B79F5) | 0;
      let t = Math.imul(seed ^ (seed >>> 15), 1 | seed);
      t = (t + Math.imul(t ^ (t >>> 7), 61 | t)) ^ t;
      return ((t ^ (t >>> 14)) >>> 0) / 4294967296;
    }
    const gauss = () => rnd() + rnd() + rnd() - 1.5;

    // Colour ramp used by both intensity plots, 0 = bottom of the bar
    const ramp = [
      [0, 255, 255, 255], [0.03, 190, 190, 190], [0.14, 51, 51, 255], [0.3, 30, 130, 140], [0.5, 0, 255, 0],
      [0.59, 255, 255, 51], [0.7, 255, 200, 0], [0.79, 255, 0, 0], [0.99, 153, 0, 153], [1, 255, 0, 255]
    ];
    function colour(v) {
      if (v >= 1) return [255, 0, 255];
      if (v <= 0) return [0, 0, 0];
      let i = 1;
      while (ramp[i][0] < v) i++;
      const a = ramp[i - 1], b = ramp[i], f = (v - a[0]) / (b[0] - a[0]);
      return [1, 2, 3].map(k => a[k] + (b[k] - a[k]) * f);
    }
    function interp(points, x) {
      for (let i = 1; i < points.length; i++) {
        if (x <= points[i][0]) {
          const [x0, y0] = points[i - 1], [x1, y1] = points[i];
          return y0 + (y1 - y0) * (x - x0) / (x1 - x0);
        }
      }
      return points[points.length - 1][1];
    }
    const clamp = v => Math.min(1, Math.max(0, v));
    function paint(id, fn) {
      const c = document.getElementById(id), ctx = c.getContext('2d');
      const img = ctx.createImageData(c.width, c.height);
      for (let y = 0; y < c.height; y++) {
        const h = 5000 * (1 - y / (c.height - 1));
        for (let x = 0; x < c.width; x++) {
          const [r, g, b] = fn(x, y, h);
          img.data.set([r, g, b, 255], (y * c.width + x) * 4);
        }
      }
      ctx.putImageData(img, 0, 0);
    }

    // Smooth noise on a lattice
    function lattice(w, h) {
      const g = Array.from({ length: w * (h + 1) }, () => rnd() - 0.5);
      return (u, v) => {
        const x = Math.min(u * (w - 1), w - 1.001), y = Math.min(v * (h - 1), h - 1.001);
        const i = Math.floor(x), j = Math.floor(y);
        const s = x - i, t = y - j, a = s * s * (3 - 2 * s), b = t * t * (3 - 2 * t);
        const p = j * w + i;
        return (g[p] * (1 - a) + g[p + 1] * a) * (1 - b) + (g[p + w] * (1 - a) + g[p + w + 1] * a) * b;
      };
    }

    const level = [[0, .66], [250, .68], [400, .65], [500, .61], [600, .59], [700, .56], [800, .54], [950, .53], [1100, .505], [1800, .502], [2500, .507], [2900, .5], [3400, .515], [4000, .535], [4500, .55], [4900, .565], [5000, .58]];
    const drop = [[0, 0], [1900, 0], [2100, .002], [2650, .006], [2750, .05], [3100, .09], [3500, .1], [4000, .13], [4400, .2], [4850, .18], [5000, .06]];
    const rowJitter = Array.from({ length: 265 }, () => 1 + gauss() * 0.6);
    const prev = [], tint = [];
    paint('backscatter', (x, y, h) => {
      if (h < 20) return rnd() < .7 ? [0, 0, 0] : [90, 255, 20];
      let p = interp(drop, h) * (h > 2700 ? rowJitter[y] : 1);
      if (Math.abs(h - 2930) < 14) p = .3;
      if (h > 2700 && prev[x]) p += .2;
      prev[x] = rnd() < p;
      if (prev[x]) return [5, 30, 5];
      const spread = h > 2600 ? .012 + (h - 2600) / 2400 * .025 : h > 1000 ? .012 : .004;
      tint[x] = (tint[x] || 0) * .6 + gauss() * spread;
      const val = Math.max(interp(level, h) + tint[x], .48);
      return colour(h > 1000 ? Math.min(.6, val) : val);
    });

    const big = lattice(14, 10), mid = lattice(50, 14), fine = lattice(30, 80), lift = lattice(24, 4);
    const cols = Array.from({ length: 476 }, () => {
      const kind = rnd();
      return {
        m: kind < .1 ? .08 + rnd() * .1 : kind < .35 ? .3 + rnd() * .2 : .6 + rnd() * .3,
        base: kind < .1 ? .35 + rnd() * .2 : .45 + rnd() * .2,
        j: gauss() * .02, top: 2700 + gauss() * 200, tail: 1700 + rnd() * 800, dark: rnd() < .25 ? .3 : .1
      };
    });
    paint('doppler', (x, y, h) => {
      const c = cols[x], u = x / 476, v = y / 265;
      if (h < 18) return rnd() < .75 ? [0, 0, 0] : [60, 240, 20];
      const above = h > c.top + 50;
      const stray = h > c.tail && rnd() < (h - c.tail) / 900 * .4 * (c.m + .2);
      if (above || stray) {
        if (above && rnd() < c.dark + (Math.abs(h - 2930) < 14 ? .2 : 0)) return [0, 0, 0];
        if (rnd() < (above ? c.m : .25)) return [255, 0, 255];
        return colour(Math.min(.98, c.base + gauss() * (above ? .4 : .15) + (above ? 0 : .15)));
      }
      let val = .555 + big(u, v) * .03 + mid(u, v) * .012;
      const rough = clamp((h - 1300) / 900);
      val += gauss() * (.005 + rough * .065) + c.j * clamp((h - 600) / 900) + rough * (.02 + big(v, u) * .04 + mid(u, v) * .06);
      // Boundary layer near the ground
      const f = clamp(1 - h / 350);
      val += fine(u, v) * .07 * f + clamp((u - .3) * 4) * .035 * Math.sin(f * 3.1) * (.7 + lift(u, .5));
      val -= clamp(1 - h / 150) * .06;
      val += clamp((u - .9) * 14) * clamp(1 - h / 240) * .2;
      return colour(val);
    });

    // Axes
    function text(x, y, s, extra) {
      return `<text x="${x}" y="${y}" ${extra || ''}>${s}</text>`;
    }
    function yAxis(id) {
      let out = '';
      for (let i = 0; i <= 10; i++) {
        const y = 0.5 + i * 26.5;
        out += text(64, y + 4, 5000 - i * 500, 'text-anchor="end"') + `<path d="M67 ${Math.round(y) + 0.5}h5" stroke="#000"/>`;
      }
      out += text(0, 0, 'Range (m)', 'text-anchor="middle" font-weight="700" font-size="11" transform="translate(29 132) rotate(-90)"');
      document.getElementById(id).innerHTML = `<g font-size="12" font-weight="600">${out}</g>`;
    }
    function xAxis(id) {
      document.getElementById(id).innerHTML = `<g font-size="12" font-weight="600" text-anchor="middle"><path d="M73.500 1v5M549.500 1v5" stroke="#000"/>${text(73, 18, '1263044')}${text(548, 18, '1263543')}</g>`;
    }
    function bar(id, edge, labels, title, caps) {
      const stops = ramp.slice(1, 9).map(r => `<stop offset="${1 - r[0]}" stop-color="rgb(${r.slice(1)})"/>`).reverse().join('');
      let out = `<defs><linearGradient id="${id}-g" x2="0" y2="1">${stops}</linearGradient></defs>`;
      out += `<path d="M1 0h20v150H1z" fill="${edge}"/><path d="M2 1h18v4H2z" fill="${caps[0]}"/><path d="M2 5h18v2H2z" fill="${caps[1]}"/><path d="M2 7h18v135H2z" fill="url(#${id}-g)"/>`;
      out += `<path d="M2 142h18v2H2z" fill="#fff"/><path d="M2 146h18v3H2z" fill="#000"/>`;
      labels.forEach((s, i) => {
        const y = 6 + i * 68.5;
        out += `<path d="M23 ${Math.round(y) + 0.5}h5" stroke="#000"/>` + text(29, y + 5, s, 'font-size="12" font-weight="600"');
      });
      out += text(0, 0, title, 'text-anchor="middle" font-size="11" font-weight="700" transform="translate(62 73) rotate(90)"');
      document.getElementById(id).innerHTML = out;
    }
    yAxis('bs-y'); yAxis('dp-y'); xAxis('bs-x'); xAxis('dp-x');
    bar('bs-bar', '#e868c8', ['-3.0', '-5.5', '-8.0'], 'log B (/m/sr)', ['#000', '#f4b8ec']);
    bar('dp-bar', '#000', ['4.0', '0.0', '-4.0'], 'Velocity (m/s)', ['#ff00ff', '#000']);

    // Line charts
    function frame(x0, x1, y0, y1, ticks, title, tx) {
      let out = `<path d="M${x0} ${y0}H${x1}V${y1}H${x0}Z" fill="#000"/>`, minor = '', major = '';
      const step = (x1 - x0) / 48;
      for (let i = 1; i < 48; i++) {
        const x = Math.round(x0 + i * step) + 0.5;
        if (i % 8) minor += `M${x} ${y0}V${y1}`; else major += `M${x} ${y0}V${y1}`;
      }
      for (let y = y0 + 5; y < y1; y += 5) minor += `M${x0} ${y + 0.5}H${x1}`;
      ticks.forEach(([s, y]) => {
        major += `M${x0} ${y + 0.5}H${x1}`;
        out += text(x0 - 9, y + 4, s, 'text-anchor="end"') + `<path d="M${x0 - 7} ${y + 0.5}h5" stroke="#000"/>`;
      });
      for (let i = 0; i <= 6; i++) {
        const x = x0 + i * (x1 - x0) / 6;
        out += `<path d="M${Math.round(x) + 0.5} ${y1 + 3}v4" stroke="#000"/>` + text(x, y1 + 18, i * 2000, 'text-anchor="middle"');
      }
      out += `<path d="${minor}" stroke="#063c0a"/><path d="${major}" stroke="#14641a"/>`;
      out += text((x0 + x1) / 2 - 3, y1 + 36, 'Range (m)', 'text-anchor="middle" font-size="12" font-weight="700"');
      out += text(0, 0, title, `text-anchor="middle" font-size="11" font-weight="700" transform="translate(34 ${tx}) rotate(-90)"`);
      return out;
    }
    (function ascope() {
      const x0 = 71, x1 = 384, y0 = 9, y1 = 113;
      let d = '';
      for (let i = 12; i < 313; i += 0.5) {
        const base = 105 - 82 * Math.exp(-(i - 13) / 6) - 20 * Math.exp(-(i - 13) / 22);
        d += `${d ? 'L' : 'M'}${x0 + i} ${Math.max(y0, base + gauss() * (i < 30 ? 2 : 5)).toFixed(1)}`;
      }
      document.getElementById('ascope').innerHTML = `<g font-size="11">${frame(x0, x1, y0, y1, [['1.20', 10], ['1.15', 34], ['1.10', 59], ['1.05', 83], ['0.99', 112]], 'A-scope', 62)}
        <path d="${d}" fill="none" stroke="#fff" stroke-width="1.300"/><path d="M72.500 9v104M71 113.500h313.500V9" stroke="#fff" fill="none"/><path d="M229.500 9v97" stroke="#e0e020" stroke-width="1.300"/></g>`;
    })();
    (function velocity() {
      const x0 = 76, x1 = 384, y0 = 9, y1 = 113;
      let d = 'M78 113V48l1-3h2l2 12', bars = '';
      for (let i = 7; i < 72; i += 0.5) {
        const amp = i < 22 ? 1 : i < 45 ? 5 : 11;
        d += `L${x0 + i} ${(57 + (i > 48 ? 3 : -i / 22) + gauss() * amp).toFixed(1)}`;
      }
      let hi = 0, open = false, lo = 0;
      for (let i = 71; i < 308; i++) {
        if (hi-- <= 0) {
          open = i > 75 && !open;
          hi = open ? rnd() * 1.700 : rnd() < .18 ? 5 + rnd() * 8 : rnd() * 2.600;
        }
        const top = open ? (rnd() < .85 ? 48 + rnd() * 16 : 18 + rnd() * 30) : y0;
        const gap = lo-- <= 0 && rnd() < .18;
        if (gap) lo = 1;
        const bottom = gap ? Math.max(top + 2, 62 + rnd() * 18) : y1;
        bars += `M${x0 + i + 0.5} ${Math.round(top)}V${Math.round(bottom)}`;
      }
      document.getElementById('velocity').innerHTML = `<g font-size="11">${frame(x0, x1, y0, y1, [['5.00', 10], ['2.50', 35], ['0.00', 61], ['-2.50', 86], ['-5.00', 111]], 'Velocity (m/s)', 62)}
        <path d="${d}" fill="none" stroke="#fff" stroke-width="1.300"/><path d="M139.500 45v68" stroke="#fff"/><path d="${bars}" stroke="#fff" shape-rendering="crispEdges"/><path d="M76 113.500h308.500V9" stroke="#eee" fill="none"/></g>`;
    })();
  </script>
</body>
</html>
